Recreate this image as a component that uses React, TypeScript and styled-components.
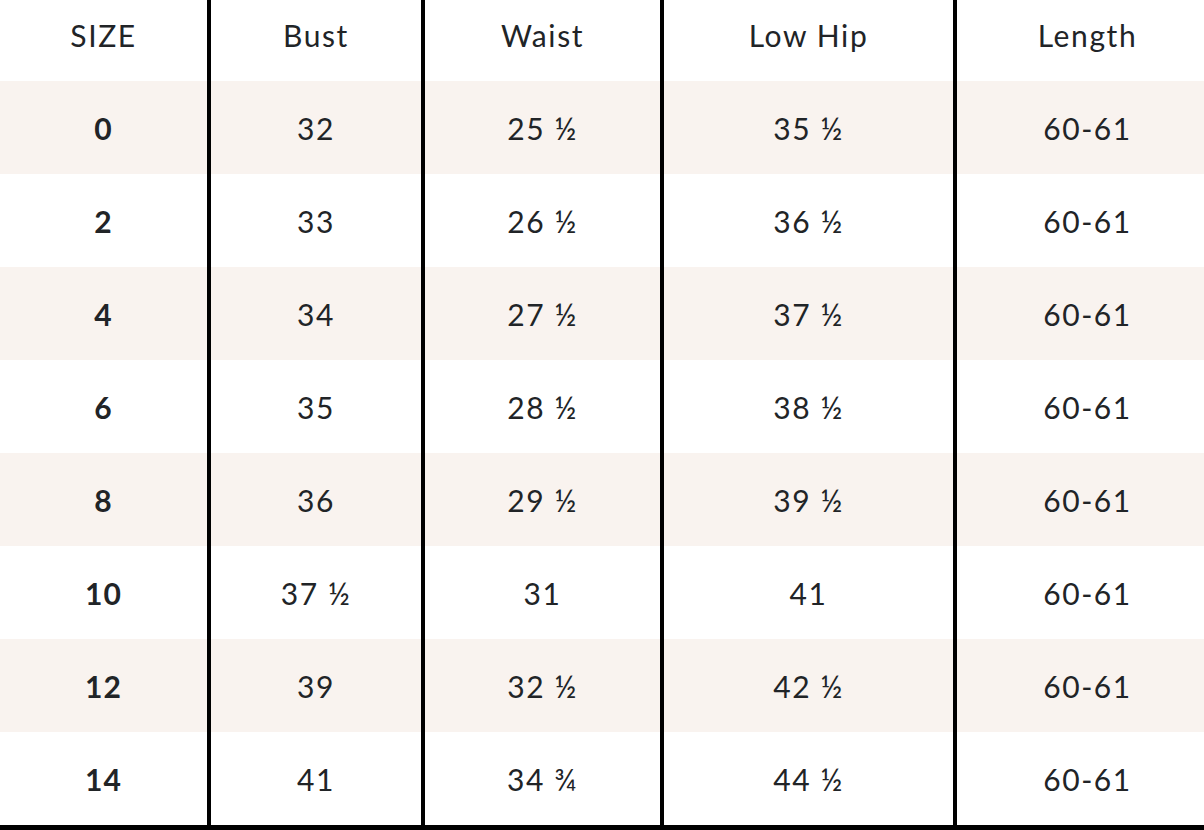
import React from 'react';
import styled, { createGlobalStyle } from 'styled-components';

const GlobalStyle = createGlobalStyle`
  html,
  body {
    margin: 0;
    padding: 0;
    background-color: #fff;
  }

  body {
    font-family: Lato, 'Noto Sans', sans-serif;
    color: #212427;
  }
`;

const Table = styled.div`
  display: grid;
  grid-template-columns: 207px 214px 239px 293px 251px;
  width: 1204px;
  border-bottom: 5px solid #000;
`;

const Cell = styled.div<{ $striped?: boolean; $first?: boolean; $last?: boolean }>`
  align-items: center;
  background-color: ${(p) => (p.$striped ? '#f9f3ef' : '#fff')};
  border-left: ${(p) => (p.$first ? 'none' : '4px solid #000')};
  box-sizing: border-box;
  display: flex;
  font-size: 30px;
  height: 93px;
  justify-content: center;
  letter-spacing: 1.6px;
  padding-left: ${(p) => (p.$last ? '14px' : '0')};
`;

const HeadCell = styled(Cell)`
  height: 81px;
  padding-bottom: 12px;
`;

const SizeCell = styled(Cell)`
  font-weight: 700;
  letter-spacing: 1px;
`;

const columns = ['SIZE', 'Bust', 'Waist', 'Low Hip', 'Length'];

const rows: [string, string, string, string, string][] = [
  ['0', '32', '25 ½', '35 ½', '60-61'],
  ['2', '33', '26 ½', '36 ½', '60-61'],
  ['4', '34', '27 ½', '37 ½', '60-61'],
  ['6', '35', '28 ½', '38 ½', '60-61'],
  ['8', '36', '29 ½', '39 ½', '60-61'],
  ['10', '37 ½', '31', '41', '60-61'],
  ['12', '39', '32 ½', '42 ½', '60-61'],
  ['14', '41', '34 ¾', '44 ½', '60-61'],
];

const lastIndex = columns.length - 1;

export default function App() {
  return (
    <>
      <GlobalStyle />
      <Table>
        {columns.map((c, i) => (
          <HeadCell key={c} $first={i === 0} $last={i === lastIndex}>
            {c}
          </HeadCell>
        ))}
        {rows.map((row, r) =>
          row.map((value, i) =>
            i === 0 ? (
              <SizeCell key={`${r}-${i}`} $first $striped={r % 2 === 0}>
                {value}
              </SizeCell>
            ) : (
              <Cell
                key={`${r}-${i}`}
                $striped={r % 2 === 0}
                $last={i === lastIndex}
              >
                {value}
              </Cell>
            ),
          ),
        )}
      </Table>
    </>
  );
}
